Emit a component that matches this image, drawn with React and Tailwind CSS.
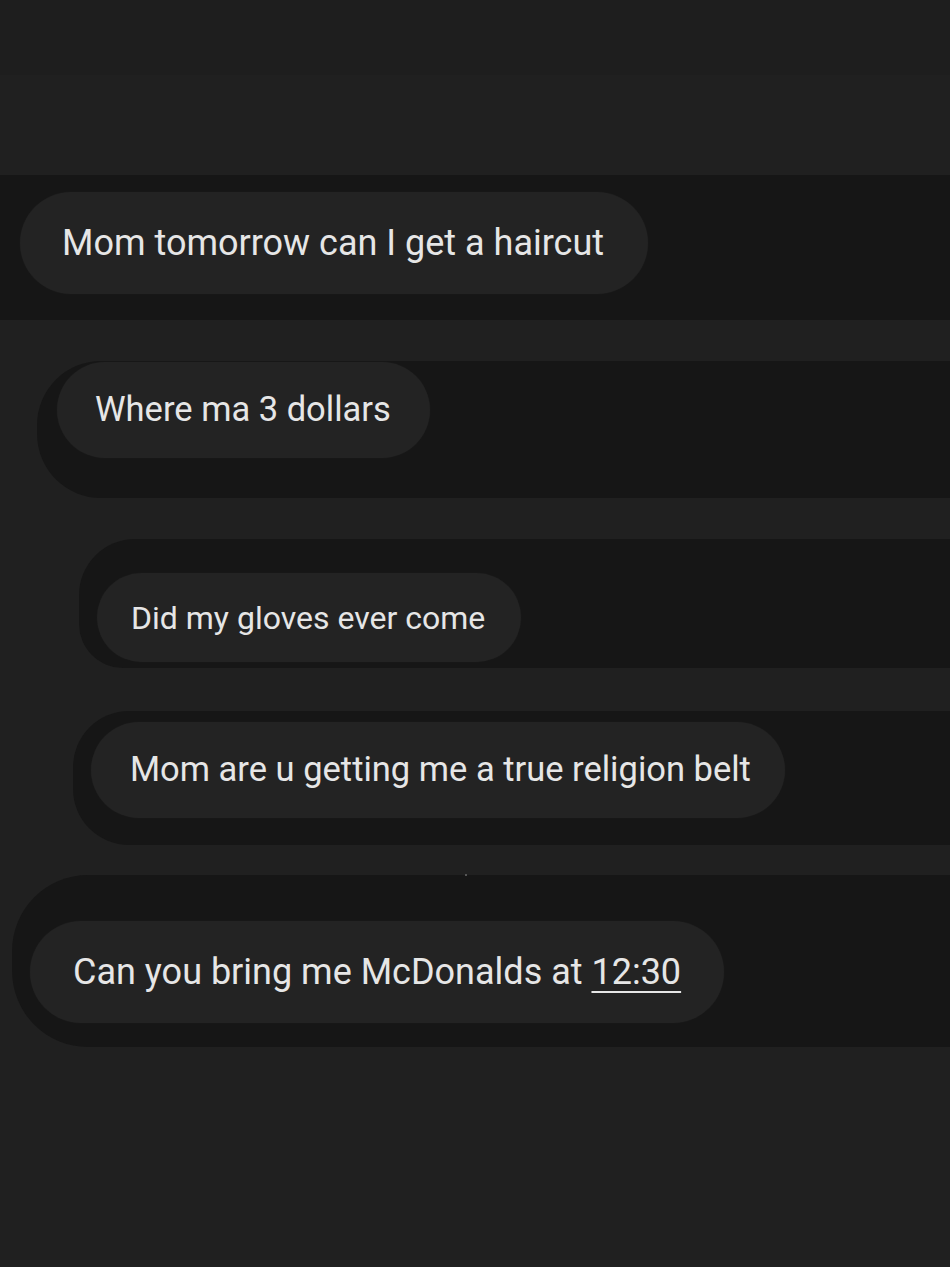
import React from 'react';

const font = { fontFamily: 'Roboto, "Noto Sans", sans-serif' };

function Bubble({ className, children }) {
  return (
    <div className={`flex items-center rounded-full bg-[#232323] text-[#e6e6e6] shadow-[0_0_2px_rgba(255,255,255,0.04)] ${className}`}>
      {children}
    </div>
  );
}

export default function App() {
  return (
    <div className="min-h-[1267px] w-[950px] bg-[#202020] flex flex-col overflow-hidden" style={font}>
      <div className="h-[75px] bg-[#1e1e1e]" />
      <div className="h-[100px] bg-[#202020]" />

      {/* 1 */}
      <div className="h-[145px] bg-[#161616] pl-[20px] pt-[17px]">
        <Bubble className="w-[628px] h-[102px] pl-[42px] text-[36px]">Mom tomorrow can I get a haircut</Bubble>
      </div>

      {/* 2 */}
      <div className="mt-[41px] ml-[37px] h-[137px] bg-[#161616] rounded-l-[64px] pt-[1px] pl-[20px]">
        <Bubble className="w-[373px] h-[96px] pl-[38px] text-[34.5px]">Where ma 3 dollars</Bubble>
      </div>

      {/* 3 */}
      <div className="mt-[41px] ml-[79px] h-[129px] bg-[#161616] rounded-tl-[56px] rounded-bl-[44px] pt-[34px] pl-[18px]">
        <Bubble className="w-[424px] h-[89px] pl-[34px] text-[32px]">Did my gloves ever come</Bubble>
      </div>

      {/* 4 */}
      <div className="mt-[43px] ml-[73px] h-[134px] bg-[#161616] rounded-l-[56px] pt-[11px] pl-[18px]">
        <Bubble className="w-[694px] h-[96px] pl-[39px] text-[34.5px]">Mom are u getting me a true religion belt</Bubble>
      </div>

      {/* 5 */}
      <div className="relative mt-[30px] ml-[12px] h-[172px] bg-[#161616] rounded-l-[76px] pt-[46px] pl-[18px]">
        <span className="absolute left-[453px] -top-[1px] w-[2px] h-[2px] bg-[#555]" />
        <Bubble className="w-[694px] h-[102px] pl-[43px] text-[36px]">
          <span>
            Can you bring me McDonalds at{' '}
            <span className="underline decoration-[2px] underline-offset-[7px]">12:30</span>
          </span>
        </Bubble>
      </div>
    </div>
  );
}
